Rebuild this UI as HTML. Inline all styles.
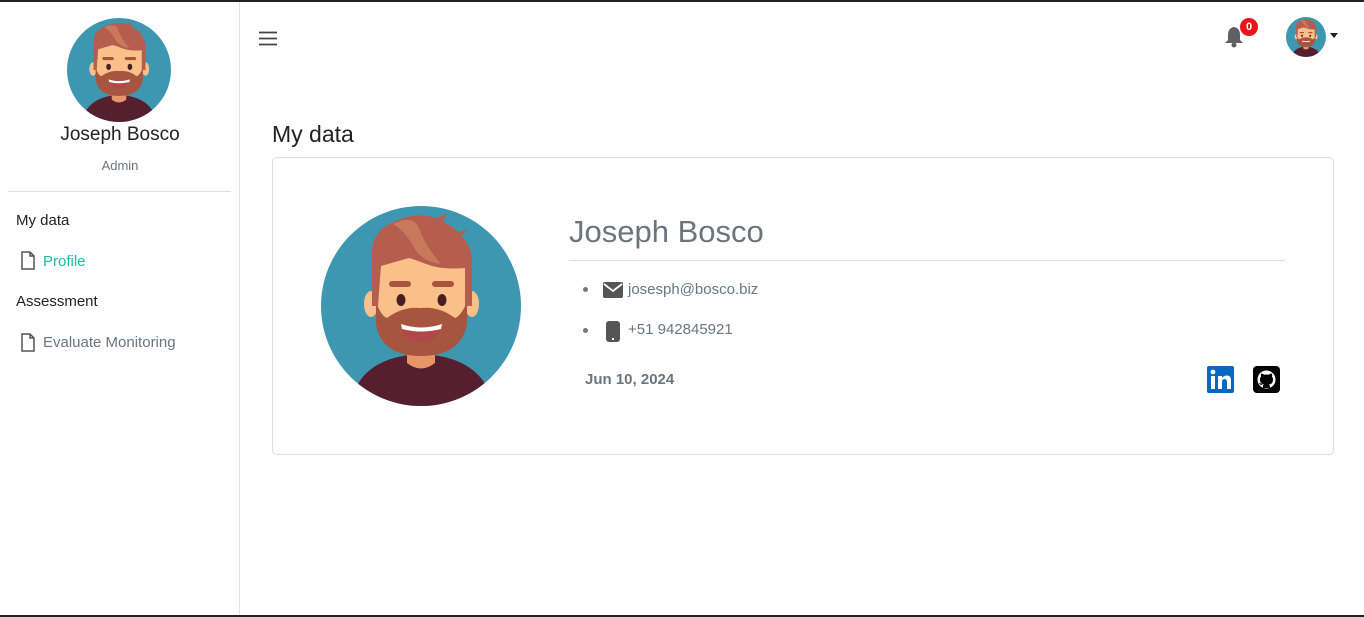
<!DOCTYPE html>
<html><head><meta charset="utf-8">
<style>
*{box-sizing:border-box;margin:0;padding:0}
body{width:1364px;height:617px;overflow:hidden;background:#fff;font-family:"Liberation Sans",sans-serif;position:relative;color:#212529}
.topb{position:absolute;left:0;top:0;width:1364px;height:2px;background:#222}
.botb{position:absolute;left:0;top:615px;width:1364px;height:2px;background:#222}
.side{position:absolute;left:0;top:2px;width:240px;height:613px;border-right:1px solid #e3e3e3}
.abs{position:absolute}
</style></head><body>
<svg width="0" height="0" style="position:absolute">
<defs>
<clipPath id="cc"><circle cx="100" cy="100" r="100"/></clipPath>
<g id="av">
<circle cx="100" cy="100" r="100" fill="#3e97b0"/>
<g clip-path="url(#cc)">
<path d="M30 200 L38 176 Q55 150 100 148 Q145 150 163 176 L172 200Z" fill="#561f2f"/>
<path d="M86 135 L86 157 Q100 168 114 157 L114 135Z" fill="#e8956a"/>
<ellipse cx="50" cy="98" rx="7" ry="13" fill="#fbbf8a"/>
<ellipse cx="151" cy="98" rx="7" ry="13" fill="#fbbf8a"/>
<path d="M57 50 L144 50 L144 115 Q144 148 100 148 Q57 148 57 115Z" fill="#fbbf8a"/>
<path d="M55 96 L55 118 Q60 150 100 150 Q140 150 146 118 L146 96 Q140 110 134 112 Q118 100 100 102 Q82 100 66 112 Q60 110 55 96Z" fill="#a8553f"/>
<path d="M80 118 Q100 128 121 118 Q118 136 100 136 Q83 136 80 118Z" fill="#b2474a"/>
<path d="M80 118 Q100 125 121 118 L120 123 Q100 128 81 123Z" fill="#fff"/>
<path d="M51 100 L51 45 Q52 22 78 14 Q95 6 115 12 L126 8 L122 16 Q132 20 137 26 L147 24 L140 30 Q151 40 151 55 L151 100 L144 100 L144 62 Q120 64 105 58 Q95 54 88 52 L60 60 L57 100Z" fill="#b55e50"/>
<path d="M72 18 Q92 8 98 22 Q104 40 120 58 Q102 56 93 42 Q85 26 72 18Z" fill="#c9785c"/>
<rect x="68" y="75" width="22" height="6" rx="3" fill="#a8553f"/>
<rect x="111" y="75" width="22" height="6" rx="3" fill="#a8553f"/>
<ellipse cx="80" cy="94" rx="4.5" ry="6" fill="#4a1c25"/>
<ellipse cx="121" cy="94" rx="4.5" ry="6" fill="#4a1c25"/>
</g>
</g>
</defs>
</svg>
<div class="topb"></div><div class="botb"></div>
<div class="side">
<svg class="abs" style="left:67px;top:16px" width="104" height="104" viewBox="0 0 200 200"><use href="#av"/></svg>
<div class="abs" style="left:0;width:240px;top:122px;text-align:center;font-size:19px;color:#222">Joseph Bosco</div>
<div class="abs" style="left:0;width:240px;top:156px;text-align:center;font-size:13px;color:#6c757d">Admin</div>
<div class="abs" style="left:8px;top:189px;width:223px;height:1px;background:#ddd"></div>
<div class="abs" style="left:16px;top:210px;font-size:15px;color:#222">My data</div>
<svg class="abs" style="left:20px;top:249px" width="16" height="20" viewBox="0 0 16 20"><path d="M2 1h8l4 4v13H2z M10 1v4h4" fill="none" stroke="#555" stroke-width="1.5"/></svg>
<div class="abs" style="left:43px;top:251px;font-size:15px;color:#1abc9c">Profile</div>
<div class="abs" style="left:16px;top:291px;font-size:15px;color:#222">Assessment</div>
<svg class="abs" style="left:20px;top:331px" width="16" height="20" viewBox="0 0 16 20"><path d="M2 1h8l4 4v13H2z M10 1v4h4" fill="none" stroke="#555" stroke-width="1.5"/></svg>
<div class="abs" style="left:43px;top:332px;font-size:15px;color:#6c757d">Evaluate Monitoring</div>
</div>
<svg class="abs" style="left:259px;top:31px" width="18" height="15"><path d="M0 1.5h18M0 7.5h18M0 13.5h18" stroke="#444" stroke-width="1.8"/></svg>
<svg class="abs" style="left:1224px;top:26px" width="20" height="22" viewBox="0 0 20 22"><path d="M10 1Q4 2 4 9L4 14 1 17H19L16 14 16 9Q16 2 10 1Z" fill="#5f5f66"/><circle cx="10" cy="19" r="2.5" fill="#5f5f66"/></svg>
<div class="abs" style="left:1240px;top:18px;width:18px;height:18px;border-radius:50%;background:#e8141b;color:#fff;font-size:11px;font-weight:bold;text-align:center;line-height:18px">0</div>
<svg class="abs" style="left:1286px;top:17px" width="40" height="40" viewBox="0 0 200 200"><use href="#av"/></svg>
<div class="abs" style="left:1330px;top:33px;border-left:4px solid transparent;border-right:4px solid transparent;border-top:5px solid #222"></div>
<div class="abs" style="left:272px;top:121px;font-size:23px;color:#222">My data</div>
<div class="abs" style="left:272px;top:157px;width:1062px;height:298px;border:1px solid #ddd;border-radius:5px"></div>
<svg class="abs" style="left:321px;top:206px" width="200" height="200" viewBox="0 0 200 200"><use href="#av"/></svg>
<div class="abs" style="left:569px;top:214px;font-size:31px;color:#6c757d">Joseph Bosco</div>
<div class="abs" style="left:569px;top:260px;width:716px;height:1px;background:#ddd"></div>
<div class="abs" style="left:583px;top:287px;width:5px;height:5px;border-radius:50%;background:#777"></div>
<svg class="abs" style="left:603px;top:282px" width="20" height="16" viewBox="0 0 20 16"><rect x="0" y="0" width="20" height="16" rx="2" fill="#555"/><path d="M1 2l9 7 9-7" fill="none" stroke="#fff" stroke-width="1.8"/></svg>
<div class="abs" style="left:628px;top:281px;font-size:15px;color:#6c757d">josesph@bosco.biz</div>
<div class="abs" style="left:583px;top:328px;width:5px;height:5px;border-radius:50%;background:#777"></div>
<svg class="abs" style="left:606px;top:321px" width="14" height="21" viewBox="0 0 14 21"><rect width="14" height="21" rx="3" fill="#555"/><rect x="6" y="17" width="2" height="2" fill="#fff"/></svg>
<div class="abs" style="left:628px;top:321px;font-size:15px;color:#6c757d">+51 942845921</div>
<div class="abs" style="left:585px;top:371px;font-size:15px;font-weight:bold;color:#6c757d">Jun 10, 2024</div>
<svg class="abs" style="left:1207px;top:366px" width="27" height="27" viewBox="0 0 27 27"><rect width="27" height="27" rx="2" fill="#0a66c2"/><rect x="4" y="10" width="4" height="13" fill="#fff"/><circle cx="6" cy="6" r="2.4" fill="#fff"/><path d="M11 10h4v2q2-2.5 5-2.5 4 0 4 5V23h-4v-7q0-3-2.3-3-2.7 0-2.7 3v7h-4z" fill="#fff"/></svg>
<svg class="abs" style="left:1253px;top:366px" width="27" height="27" viewBox="0 0 27 27"><rect width="27" height="27" rx="4" fill="#000"/><circle cx="13.5" cy="13.5" r="9" fill="#fff"/><path d="M10 22v-3q-3 .5-4-2 2 0 3 1.5 1 1 2 0 -4-.5-4-5 0-1.8 1-3-.3-1.5.2-3 1.5 0 3 1.3 2.3-.6 4.6 0 1.5-1.3 3-1.3.5 1.5.2 3 1 1.2 1 3 0 4.5-4 5 1 1 1 2.5V22z" fill="#000"/></svg>
</body></html>
